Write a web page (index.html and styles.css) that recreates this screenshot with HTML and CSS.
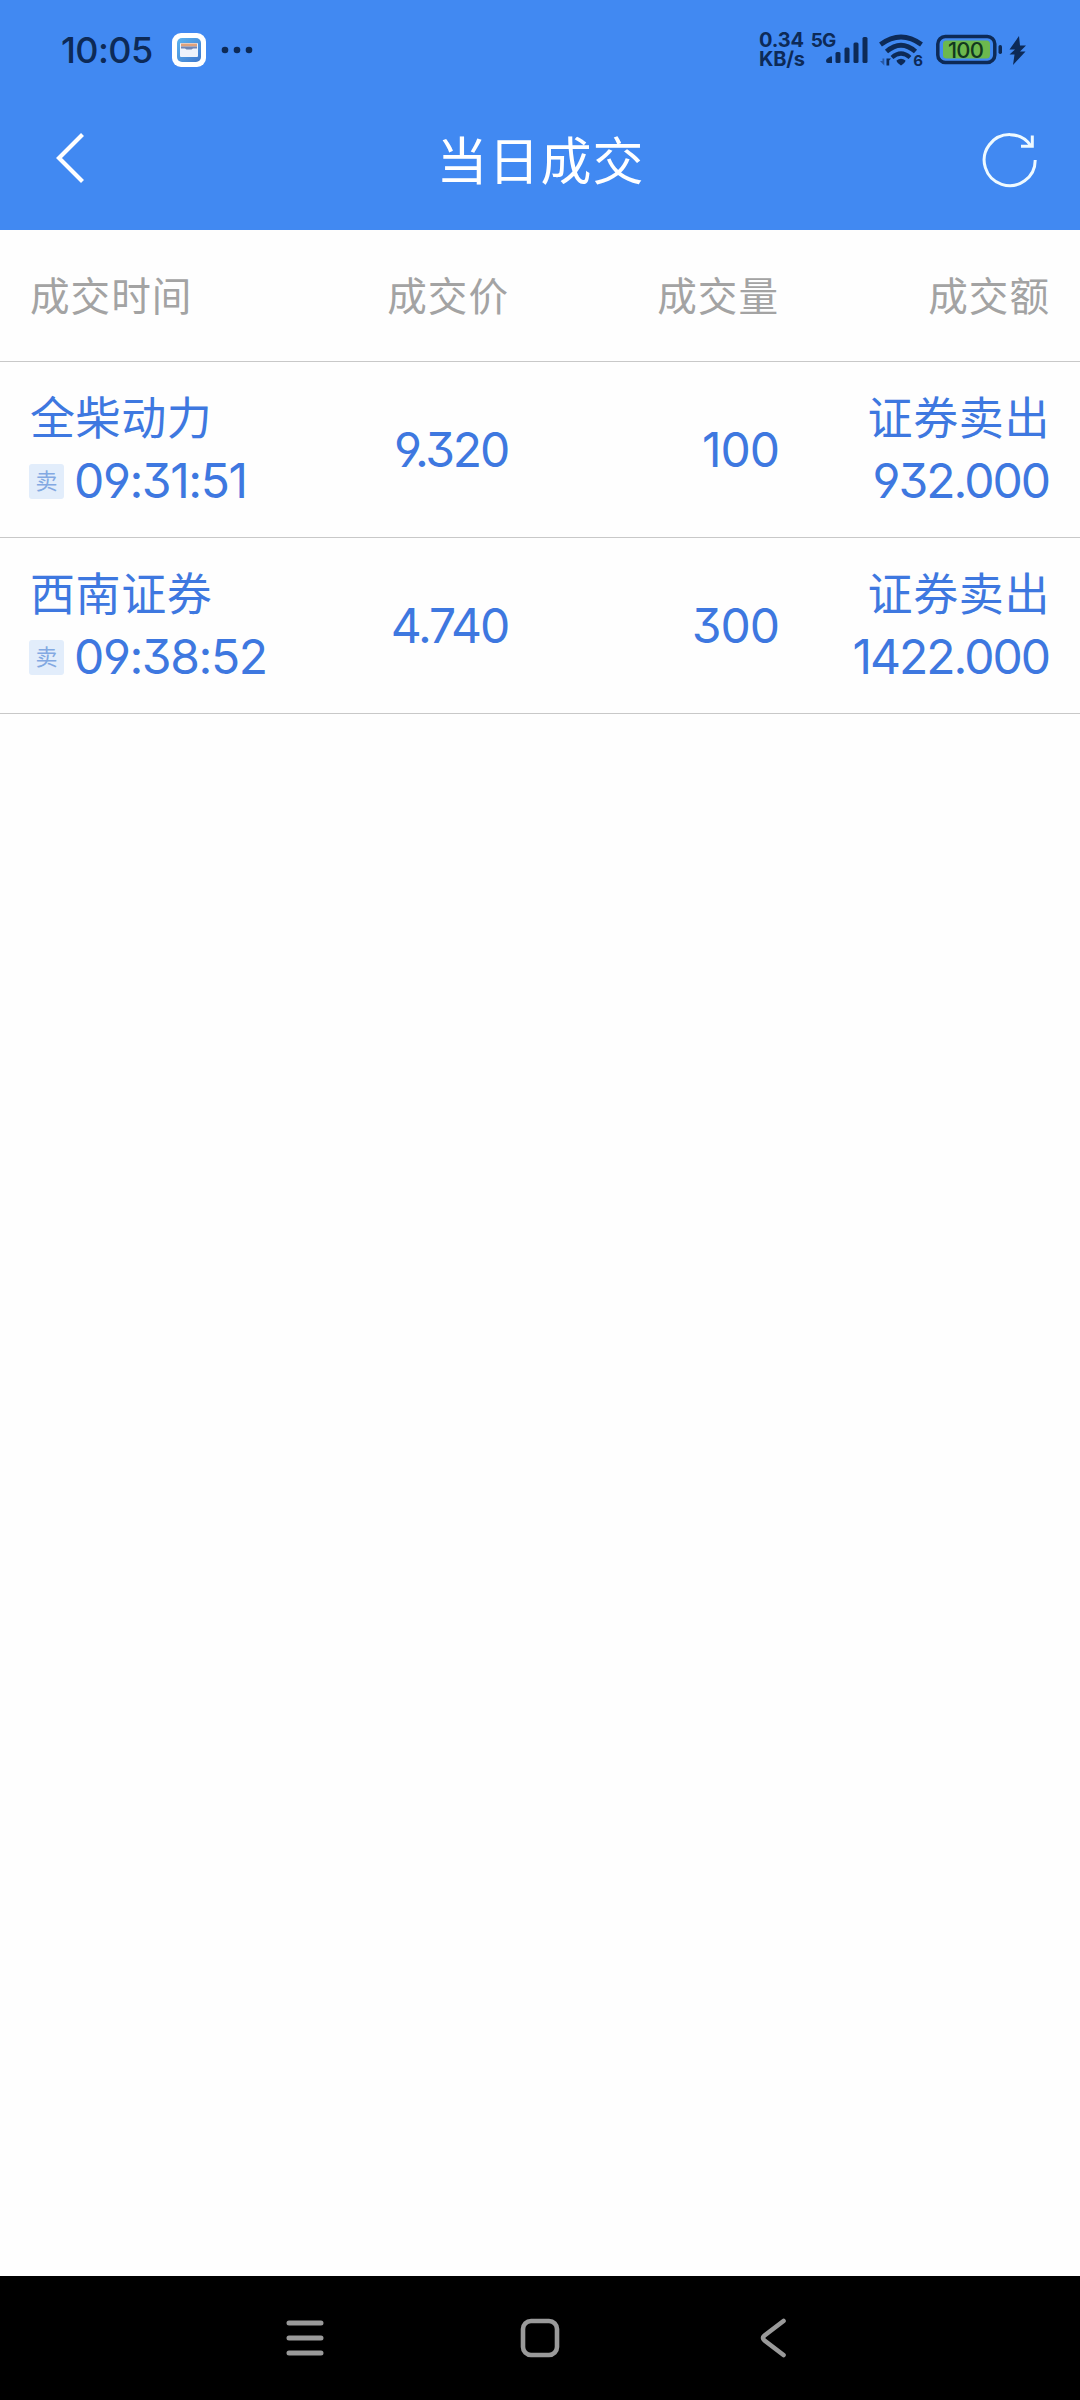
FILE: index.html
```html
<!DOCTYPE html>
<html lang="zh-CN">
<head>
<meta charset="utf-8">
<title>当日成交</title>
<link rel="stylesheet" href="styles.css">
</head>
<body>
<div class="screen">
  <header class="top">
    <div class="status">
      <span class="clock">10:05</span>
      <svg class="app-icon" width="34" height="34" viewBox="0 0 34 34">
        <defs><linearGradient id="g" x1="0" y1="0" x2="1" y2="1"><stop offset="0" stop-color="#5cb4f0"/><stop offset="1" stop-color="#3f78cc"/></linearGradient></defs>
        <rect width="34" height="34" rx="9" fill="#fff"/>
        <rect x="5" y="5" width="24" height="24" rx="5" fill="url(#g)"/>
        <rect x="8" y="10" width="18" height="14" rx="1" fill="#eef3fb"/>
        <rect x="9" y="10.500" width="16" height="3" fill="#e0a27c"/>
        <path d="M9 13.500h16v2h-4l-1.500 1h-5L13 15.500H9z" fill="#6f86b5"/>
      </svg>
      <svg class="dots" width="32" height="8" viewBox="0 0 32 8"><g fill="#0d2a57"><circle cx="4" cy="4" r="3.300"/><circle cx="16" cy="4" r="3.300"/><circle cx="28" cy="4" r="3.300"/></g></svg>
      <span class="spacer"></span>
      <div class="net">
        <div class="net-line"><span>0.34</span><span class="gen">5G</span></div>
        <div class="net-line">KB/s</div>
      </div>
      <svg class="indicators" width="204" height="40" viewBox="826 30 204 40">
        <g fill="#0d2a57">
          <path d="M826 61q0-2 2-3l2-1.300q2-1 2 1V63h-4q-2 0-2-2z"/>
          <rect x="835.500" y="52" width="5" height="11" rx="1.500"/>
          <rect x="844.500" y="47.500" width="5" height="15.500" rx="1.500"/>
          <rect x="853.500" y="42.500" width="5" height="20.500" rx="1.500"/>
          <rect x="862.500" y="37" width="5" height="26" rx="1.500"/>
          <path d="M896.500 60.500q4.500-3.500 9 0 0 2-4.500 5-4.500-3-4.500-5z"/>
          <path d="M886.500 65.500V58.500h4.500l-1.800 2v5z"/>
          <path d="M882.500 58.500h1.800v7l-4.300-4.500h2.500z" opacity=".5"/>
          <rect x="998.500" y="45" width="3.500" height="9" rx="1.700"/>
          <path d="M1019 36l-9.500 13.500h5.500l-5.500 5h5l-1.500 10.500 12.500-13.500h-5.500l6-6h-6z"/>
        </g>
        <g fill="none" stroke="#0d2a57" stroke-width="4.800">
          <path d="M880.500 44.500q20.500-15 41 0"/>
          <path d="M886.500 51.500q14.500-12.500 29 0"/>
          <path d="M892 57.500q9-8 18 0" stroke-width="4.200"/>
          <rect x="937.800" y="36.500" width="57" height="26" rx="7.500" stroke-width="3.500"/>
        </g>
        <rect x="943" y="40.500" width="47" height="18" rx="3.500" fill="#6cb84e"/>
        <text x="965.500" y="57.700" class="battery-text" text-anchor="middle">100</text>
        <text x="918" y="65.500" class="wifi-text" text-anchor="middle">6</text>
      </svg>
    </div>
    <div class="titlebar">
      <svg class="back" width="34" height="54" viewBox="0 0 34 54"><path d="M28.500 3.500L5 27l23.500 23.500" fill="none" stroke="#fff" stroke-width="4.200"/></svg>
      <h1 class="title">当日成交</h1>
      <svg width="58" height="58" viewBox="0 0 58 58"><g fill="none" stroke="#effaff" stroke-width="3"><path d="M54.200 29A25.500 25.500 0 1 1 49.800 14.800"/><path d="M51.300 4.500V15.200H40"/></g></svg>
    </div>
  </header>

  <main class="content">
    <div class="row head">
      <div class="cell first">成交时间</div>
      <div class="cell">成交价</div>
      <div class="cell">成交量</div>
      <div class="cell">成交额</div>
    </div>
    <div class="row deal">
      <div class="cell first">
        <div class="name">全柴动力</div>
        <div class="time"><span class="badge">卖</span><span class="num">09:31:51</span></div>
      </div>
      <div class="cell num price">9.320</div>
      <div class="cell num">100</div>
      <div class="cell">
        <div class="name">证券卖出</div>
        <div class="num amount">932.000</div>
      </div>
    </div>
    <div class="row deal">
      <div class="cell first">
        <div class="name">西南证券</div>
        <div class="time"><span class="badge">卖</span><span class="num">09:38:52</span></div>
      </div>
      <div class="cell num price">4.740</div>
      <div class="cell num">300</div>
      <div class="cell">
        <div class="name">证券卖出</div>
        <div class="num amount">1422.000</div>
      </div>
    </div>
  </main>

  <nav class="navbar">
    <svg width="40" height="40" viewBox="0 0 40 40"><path d="M4 5h32M4 20h32M4 35h32" stroke="#9a9a9a" stroke-width="5" stroke-linecap="round"/></svg>
    <svg width="40" height="40" viewBox="0 0 40 40"><rect x="3" y="3" width="34" height="34" rx="8" fill="none" stroke="#9a9a9a" stroke-width="4.600"/></svg>
    <svg width="40" height="40" viewBox="0 0 40 40"><path d="M28.500 3L9.500 17.500q-3 2.500 0 5L28.500 37" fill="none" stroke="#9a9a9a" stroke-width="4.600" stroke-linecap="round"/></svg>
  </nav>
</div>
</body>
</html>
```
FILE: styles.css
```css
* { box-sizing: border-box; }
body { margin: 0; background: #fefefe; font-family: Inter, "Noto Sans CJK SC", sans-serif; }
svg { display: block; flex: none; }
.screen { width: 1080px; height: 2400px; display: flex; flex-direction: column; }

.top { height: 230px; background: #4189f2; }
.status { height: 100px; padding: 0 50px 0 61px; display: flex; align-items: center; color: #0d2a57; }
.clock { width: 111px; font-size: 36px; font-weight: 500; letter-spacing: -0.6px; }
.dots { margin-left: 15px; }
.spacer { flex: 1; }
.net { width: 67px; font: 700 20px/19px Inter, sans-serif; letter-spacing: -0.2px; }
.net-line { display: flex; white-space: nowrap; }
.gen { margin-left: 7px; font-size: 19px; letter-spacing: -1px; }
.battery-text { font: 500 22px Inter, sans-serif; fill: #12381f; letter-spacing: -.8px; }
.wifi-text { font: 700 15px Inter, sans-serif; fill: #0d2a57; }

.titlebar { height: 120px; padding: 0 41px 0 54px; display: flex; align-items: center; justify-content: space-between; }
.back { margin-bottom: 4px; }
.title { margin: 3px 0 0 12px; color: #fff; font-size: 51px; font-weight: 400; letter-spacing: 1px; line-height: 60px; }

.content { flex: 1; }
.row { display: grid; grid-template-columns: 239px 240px 270px 271px; padding: 0 30px; border-bottom: 1px solid #c8c8c8; align-items: center; text-align: right; }
.first { text-align: left; }
.head { height: 132px; padding-bottom: 5px; color: #a3a3a3; font-size: 39.6px; letter-spacing: 1px; }
.deal { height: 176px; color: #3e78e0; }
.name { padding-top: 2px; font-size: 45px; line-height: 60px; letter-spacing: 0.6px; }
.num { font-size: 48px; letter-spacing: -1px; line-height: 64px; font-feature-settings: "cv03", "cv04", "cv09"; }
.price { letter-spacing: -2.2px; padding-right: 1px; }
.amount { letter-spacing: -2px; padding-right: 1px; }
.time { display: flex; align-items: center; gap: 10px; height: 64px; white-space: nowrap; }
.time .num { letter-spacing: -1.4px; padding-top: 1px; }
.badge { width: 35px; height: 35px; margin: 1px 0 0 -1px; border-radius: 3px; background: #e2edfb; color: #83a9e2; font-size: 22px; line-height: 34px; text-align: center; }

.navbar { height: 124px; background: #000; display: flex; align-items: center; padding: 0 285px; justify-content: space-between; }
```
